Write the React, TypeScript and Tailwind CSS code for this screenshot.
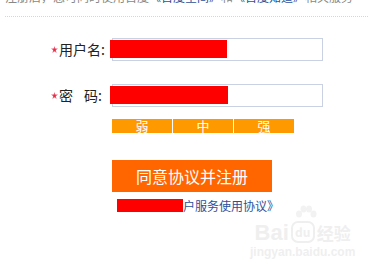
import React from 'react';

const Star = () => (
  <svg width="7" height="7" viewBox="0 0 7 7" className="mr-[1px]">
    <path d="M3.5 0 L4.3 2.4 L7 2.6 L4.9 4.2 L5.6 7 L3.5 5.4 L1.4 7 L2.1 4.2 L0 2.6 L2.7 2.4 Z" fill="#f06080" />
    <circle cx="3.5" cy="3.8" r="1.3" fill="#e03040" />
  </svg>
);

const Field = ({ label, spaced, blobW }: { label: string; spaced?: boolean; blobW: number }) => (
  <div className="flex items-center h-[23px]">
    <div className="w-[112px] pl-[51px] flex items-center text-[14px] text-[#222]">
      <Star />
      {spaced ? (
        <span className="flex">
          <span>密</span>
          <span className="w-[11px]" />
          <span>码:</span>
        </span>
      ) : (
        <span>{label}</span>
      )}
    </div>
    <div className="relative w-[211px] h-[23px] border border-[#c9d1e3] bg-white">
      <div className="absolute left-[-3px] top-[1px] h-[18px] bg-[#ff0000]" style={{ width: blobW }} />
    </div>
  </div>
);

export default function App() {
  return (
    <div
      className="relative w-[368px] h-[264px] overflow-hidden bg-white"
      style={{ fontFamily: '"Noto Sans CJK SC", "Liberation Sans", sans-serif' }}
    >
      <div className="mt-[-10px] pl-[5px] text-[12px] leading-[13px] text-[#888] whitespace-nowrap">
        注册后，您可同时使用百度<span className="text-[#2d4f9a]">《百度空间》</span>和<span className="text-[#2d4f9a]">《百度知道》</span>相关服务
      </div>
      <div className="ml-[5px] mt-[13px] border-t border-dotted border-[#d6d6d6]" />

      <div className="mt-[21px]">
        <Field label="用户名:" blobW={117} />
      </div>
      <div className="mt-[23px]">
        <Field label="密码:" spaced blobW={118} />
      </div>

      <div className="ml-[112px] mt-[12px] flex gap-[1px] w-[182px] h-[14px] text-[13px] leading-[14px] text-white">
        <div className="flex-1 bg-[#ff9900] text-center">弱</div>
        <div className="flex-1 bg-[#ff9900] text-center">中</div>
        <div className="flex-1 bg-[#ff9900] text-center">强</div>
      </div>

      <div className="ml-[112px] mt-[27px] w-[160px] h-[32px] bg-[#ff6600] text-white text-[16px] leading-[32px] text-center">
        同意协议并注册
      </div>

      <div className="relative ml-[111px] mt-[6px] w-fit text-[12px] leading-[16px] text-[#2d4f9a] whitespace-nowrap">
        《百度空间用户服务使用协议》
        <div className="absolute left-[6px] top-[1px] w-[66px] h-[13px] bg-[#ff0000]" />
      </div>

      <div className="absolute left-[250px] top-[205px] flex flex-col items-center text-[#efefef] select-none whitespace-nowrap">
        <svg width="22" height="16" viewBox="0 0 22 16" className="ml-[6px]">
          <g fill="#f2f2f2">
            <ellipse cx="4" cy="9" rx="3" ry="3.5" />
            <ellipse cx="8.5" cy="4" rx="3" ry="3.5" />
            <ellipse cx="14" cy="4" rx="3" ry="3.5" />
            <ellipse cx="18.5" cy="9" rx="3" ry="3.5" />
          </g>
        </svg>
        <div className="flex flex-nowrap items-end gap-[2px]">
          <span className="text-[22px] font-bold leading-[20px]" style={{ fontFamily: '"Liberation Sans", sans-serif' }}>Bai</span>
          <span className="w-[24px] h-[22px] rounded-[7px] border-2 border-[#efefef] text-[12px] leading-[17px] text-center font-bold">du</span>
          <span className="text-[17px] leading-[20px] font-bold">经验</span>
        </div>
        <span className="mt-[2px] text-[12px] leading-[14px] font-bold" style={{ fontFamily: '"Liberation Sans", sans-serif' }}>jingyan.baidu.com</span>
      </div>
    </div>
  );
}
